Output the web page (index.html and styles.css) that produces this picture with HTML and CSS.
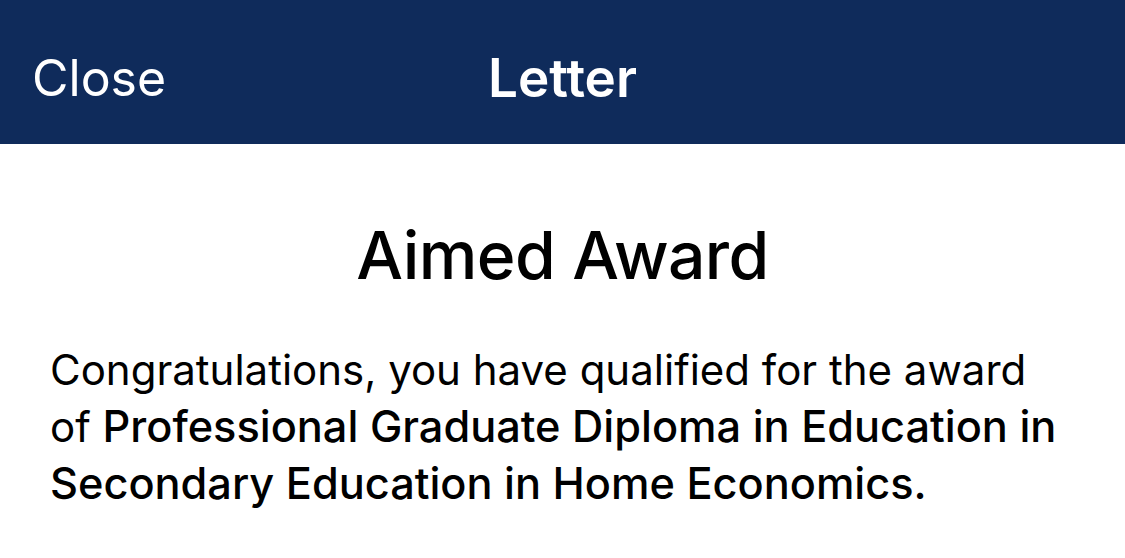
FILE: index.html
```html
<!DOCTYPE html>
<html>
<head>
<meta charset="utf-8">
<link rel="stylesheet" href="styles.css">
</head>
<body>
<header class="navbar">
  <span class="nav-left">Close</span>
  <span class="nav-title">Letter</span>
  <span class="nav-right"></span>
</header>
<main class="content">
  <h1 class="title">Aimed Award</h1>
  <p class="body">Congratulations, you have qualified for the award of <span class="award">Professional Graduate Diploma in Education in Secondary Education in Home Economics.</span></p>
</main>
</body>
</html>
```
FILE: styles.css
```css
html, body {
  margin: 0;
  padding: 0;
  background: #ffffff;
  font-family: Inter, "Noto Sans", sans-serif;
  -webkit-font-smoothing: antialiased;
}
.navbar {
  height: 144px;
  background: #0f2b5b;
  color: #ffffff;
  display: grid;
  grid-template-columns: 1fr auto 1fr;
  align-items: center;
  padding: 0 32px;
  box-sizing: border-box;
}
.nav-left,
.nav-title {
  line-height: 60px;
  padding-top: 12px;
}
.nav-left {
  font-size: 50px;
  font-weight: 400;
}
.nav-title {
  font-size: 53px;
  font-weight: 600;
}
.content {
  padding: 0 50px;
}
.title {
  margin: 73px 0 0;
  text-align: center;
  font-size: 66px;
  font-weight: 500;
  line-height: 76px;
  letter-spacing: -0.6px;
  color: #000;
}
.body {
  margin: 48px 0 0;
  font-size: 42px;
  line-height: 57px;
  color: #000;
}
.award {
  font-size: 43.3px;
  font-weight: 500;
}
```
